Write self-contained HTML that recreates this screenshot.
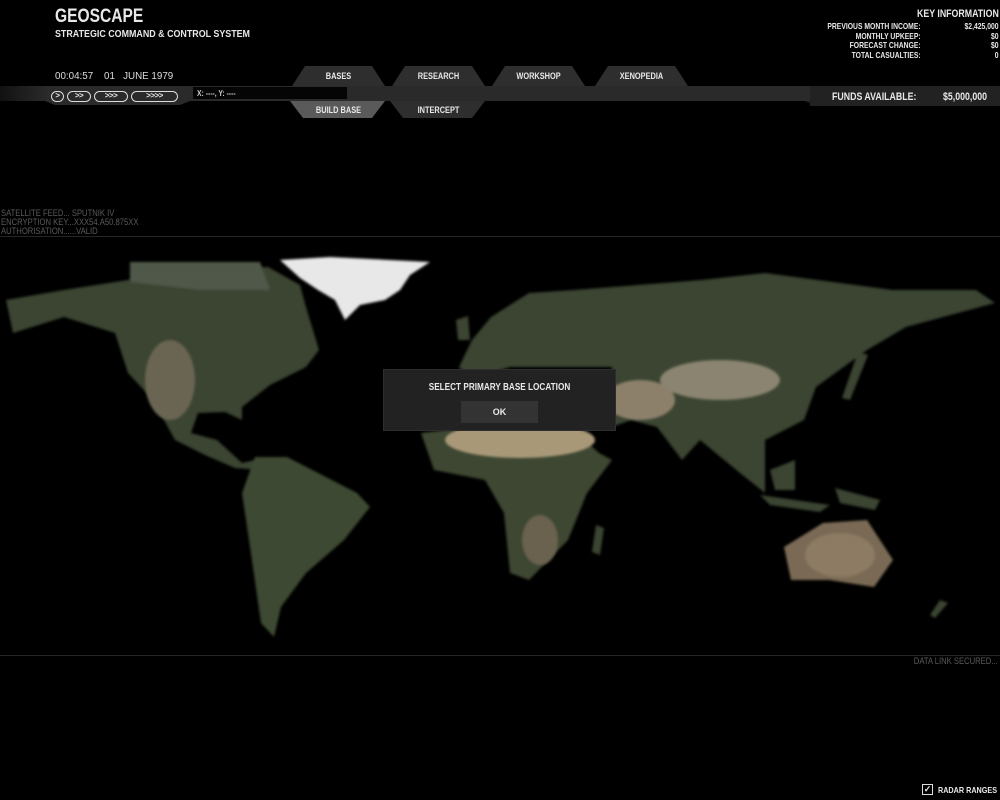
<!DOCTYPE html>
<html><head><meta charset="utf-8"><style>
*{margin:0;padding:0;box-sizing:border-box}
body{width:1000px;height:800px;background:#000;position:relative;overflow:hidden;font-family:"Liberation Sans",sans-serif;font-weight:bold;color:#e8e8e8}
.a{position:absolute;white-space:nowrap;transform-origin:left top}
.c{transform:scaleX(.85)}
.cr{transform:scaleX(.8);transform-origin:right top}
.cc{transform:scaleX(.82);transform-origin:center top}
.dim{color:#5a5a5a;font-weight:normal;font-size:9px;line-height:9px;transform:scaleX(.85)}
.sp{display:inline-block;border:1.5px solid #ddd;border-radius:6px;height:11px;font-size:8px;line-height:8px;text-align:center;margin-right:3px;vertical-align:top;letter-spacing:-0.5px}
</style></head><body>
<div class="a c" style="left:55px;top:6px;font-size:19px;transform:scaleX(.82)">GEOSCAPE</div>
<div class="a c" style="left:55px;top:29px;font-size:10px;transform:scaleX(.89)">STRATEGIC COMMAND &amp; CONTROL SYSTEM</div>
<div class="a c" style="left:55px;top:71px;font-size:10px;font-weight:normal;color:#ddd;transform:scaleX(.98)">00:04:57&nbsp;&nbsp;&nbsp;&nbsp;01&nbsp;&nbsp;&nbsp;JUNE 1979</div>

<svg class="a" style="left:0;top:60px" width="1000" height="65">
<defs><linearGradient id="lg" x1="0" x2="1"><stop offset="0" stop-color="#111"/><stop offset="1" stop-color="#2c2c2c"/></linearGradient></defs>
<rect x="0" y="26" width="1000" height="15" fill="#2a2a2a"/>
<rect x="0" y="26" width="50" height="15" fill="url(#lg)"/>
<polygon points="45,41 190,41 180,45 55,45" fill="#2a2a2a"/>
<rect x="193" y="27" width="154" height="12" fill="#050505"/>
<polygon points="292,26 305,6 372,6 385,26" fill="#2e2e2e"/>
<polygon points="392,26 405,6 472,6 485,26" fill="#2e2e2e"/>
<polygon points="492,26 505,6 572,6 585,26" fill="#2e2e2e"/>
<polygon points="595,26 608,6 675,6 688,26" fill="#2e2e2e"/>
<polygon points="290,41 385,41 372,58 303,58" fill="#5a5a5a"/>
<polygon points="390,41 485,41 472,58 403,58" fill="#2e2e2e"/>
<polygon points="805,41 1000,41 1000,46 815,46" fill="#1c1c1c"/>
<rect x="810" y="26" width="190" height="20" fill="#222"/>
</svg>
<div class="a" style="left:51px;top:91px">
<span class="sp" style="width:13px">&gt;</span><span class="sp" style="width:24px">&gt;&gt;</span><span class="sp" style="width:34px">&gt;&gt;&gt;</span><span class="sp" style="width:47px">&gt;&gt;&gt;&gt;</span></div>
<div class="a c" style="left:197px;top:89px;font-size:8px;color:#ccc">X: ----, Y: ----</div>
<div class="a cc" style="left:292px;width:93px;text-align:center;top:71px;font-size:9px">BASES</div>
<div class="a cc" style="left:392px;width:93px;text-align:center;top:71px;font-size:9px">RESEARCH</div>
<div class="a cc" style="left:492px;width:93px;text-align:center;top:71px;font-size:9px">WORKSHOP</div>
<div class="a cc" style="left:595px;width:93px;text-align:center;top:71px;font-size:9px">XENOPEDIA</div>
<div class="a cc" style="left:292px;width:93px;text-align:center;top:105px;font-size:9px">BUILD BASE</div>
<div class="a cc" style="left:392px;width:93px;text-align:center;top:105px;font-size:9px">INTERCEPT</div>
<div class="a c" style="left:832px;top:91px;font-size:11px;transform:scaleX(.8)">FUNDS AVAILABLE:</div>
<div class="a c" style="left:943px;top:91px;font-size:11px;transform:scaleX(.8)">$5,000,000</div>

<div class="a c" style="left:917px;top:8px;font-size:11px;transform:scaleX(.8)">KEY INFORMATION</div>
<div class="a cr" style="right:79px;top:22px;font-size:8.5px;line-height:9.5px;text-align:right">PREVIOUS MONTH INCOME:<br>MONTHLY UPKEEP:<br>FORECAST CHANGE:<br>TOTAL CASUALTIES:</div>
<div class="a cr" style="right:1px;top:22px;font-size:8.5px;line-height:9.5px;text-align:right">$2,425,000<br>$0<br>$0<br>0</div>

<div class="a dim" style="left:1px;top:209px">SATELLITE FEED... SPUTNIK IV<br>ENCRYPTION KEY...XXX54.A50.875XX<br>AUTHORISATION......VALID</div>
<div class="a" style="left:0;top:236px;width:1000px;height:1px;background:#262626"></div>
<div class="a" style="left:0;top:655px;width:1000px;height:1px;background:#262626"></div>
<div class="a dim" style="right:2px;top:657px;transform-origin:right top">DATA LINK SECURED...</div>

<svg class="a" style="left:0;top:0" width="1000" height="800">
<defs>
<filter id="bl"><feGaussianBlur stdDeviation="1.2"/></filter>
</defs>
<g filter="url(#bl)" fill="#3a4430">
<polygon points="6,300 64,290 128,280 191,273 268,267 300,285 306,307 319,350 306,367 270,385 242,407 242,420 225,412 198,413 191,433 217,440 242,463 268,457 262,470 235,468 205,455 175,440 153,400 128,373 115,333 64,317 13,333"/>
<polygon points="255,457 287,457 357,493 370,507 344,540 306,573 281,607 274,637 261,623 249,540 242,493" fill="#3c4a30"/>
<polygon points="459,367 472,340 491,317 529,293 574,290 702,280 765,273 893,290 976,290 995,303 906,327 867,350 816,387 804,420 765,440 765,493 740,473 700,440 682,460 657,427 631,420 612,427 612,367 561,367 510,367 470,380"/>
<polygon points="421,433 446,430 574,430 599,453 612,460 587,493 568,540 529,580 510,573 504,513 485,480 434,470" fill="#3e4630"/>
<polygon points="596,525 604,528 600,555 592,552" />
<polygon points="784,547 823,523 867,520 893,560 874,587 829,580 791,580" fill="#7a6a55"/>
<polygon points="760,495 830,505 820,512 770,505"/>
<polygon points="835,488 880,500 875,510 840,503"/>
<polygon points="770,470 795,460 795,490 775,490"/>
<polygon points="858,352 868,355 850,400 842,398"/>
<polygon points="940,600 948,603 935,618 930,615"/>
<polygon points="456,320 468,316 470,340 458,340"/>
</g>
<g filter="url(#bl)">
<polygon points="280,260 330,257 430,262 410,275 400,290 385,300 360,305 345,320 335,300 318,290 300,278" fill="#e8e8e8"/>
<polygon points="130,262 260,262 270,290 200,290 130,282" fill="#505848"/>
<ellipse cx="520" cy="440" rx="75" ry="18" fill="#a89878"/>
<ellipse cx="640" cy="400" rx="35" ry="20" fill="#8c806a"/>
<ellipse cx="720" cy="380" rx="60" ry="20" fill="#8a8470"/>
<ellipse cx="170" cy="380" rx="25" ry="40" fill="#6a6552"/>
<ellipse cx="540" cy="540" rx="18" ry="25" fill="#6a6250"/>
<ellipse cx="840" cy="555" rx="35" ry="22" fill="#8d7b64"/>
</g>
</svg>

<div class="a" style="left:383px;top:369px;width:233px;height:62px;background:#222;border:1px solid #2e2e2e"></div>
<div class="a cc" style="left:383px;top:382px;width:233px;text-align:center;font-size:10px">SELECT PRIMARY BASE LOCATION</div>
<div class="a" style="left:461px;top:401px;width:77px;height:22px;background:#333;text-align:center;font-size:9px;line-height:22px">OK</div>

<div class="a" style="left:922px;top:784px;width:11px;height:11px;border:1.5px solid #ddd;font-size:9px;line-height:8px;text-align:center">✓</div>
<div class="a c" style="left:938px;top:785px;font-size:8.5px">RADAR RANGES</div>
</body></html>
